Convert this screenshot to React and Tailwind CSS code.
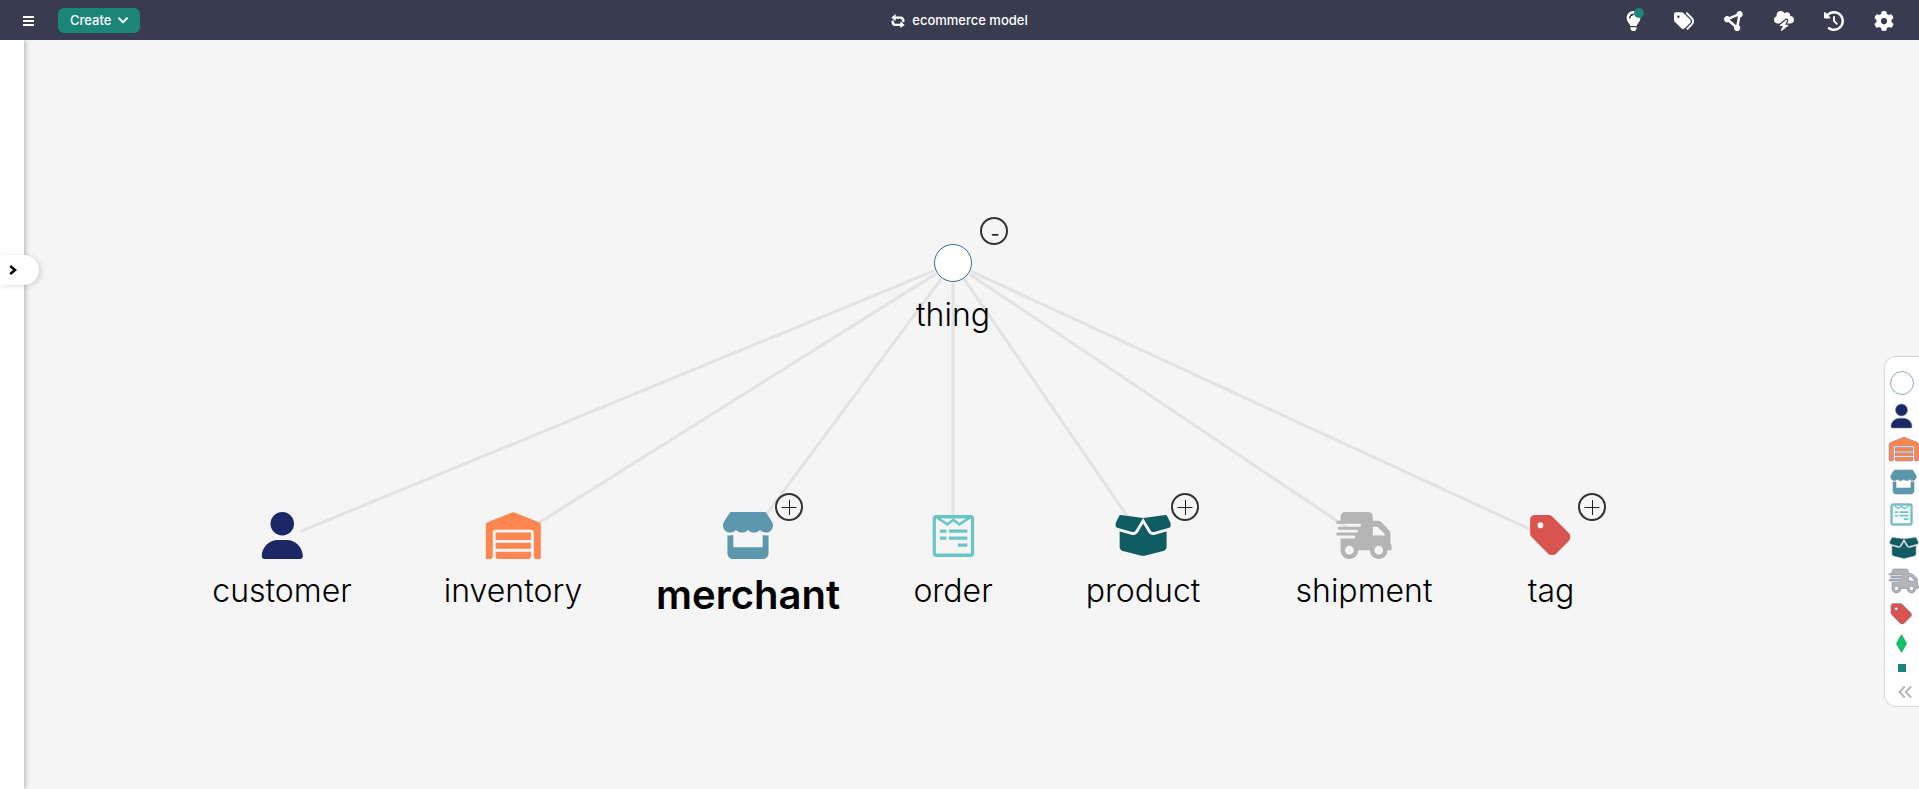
import React from "react";
import {
  FaUser,
  FaWarehouse,
  FaStore,
  FaBoxOpen,
  FaTruckFast,
  FaTag,
  FaLightbulb,
  FaTags,
  FaCircleNodes,
  FaCloudBolt,
  FaClockRotateLeft,
  FaGear,
} from "react-icons/fa6";

function ReceiptIcon({ className, strokeWidth = 0 }) {
  return (
    <svg viewBox="0 0 42 42" className={className} fill="none" stroke="currentColor" aria-hidden="true">
      {strokeWidth > 0 && <rect x="0" y="0" width="42" height="42" rx="3" stroke="#6e87a5" strokeWidth="2" />}
      <rect x="1.8" y="1.8" width="38.4" height="38.4" rx="2" strokeWidth="3.4" />
      <path d="M4.5 2.5 15 9.3 21 4.8 27 9.3 37.5 2.5" strokeWidth="2.6" />
      <path d="M7.5 16.2h6.5M16.5 16.2h18.5M7.5 23.2h6.5M16.5 23.2h18.5M25.5 30.2h9.5" strokeWidth="3.2" />
    </svg>
  );
}

const ICONS = {
  customer: { Icon: FaUser, color: "text-[#1c2765]", size: "w-[42px] h-[47px]", small: "w-[21px] h-6 ml-px", box: "0 0 448 512" },
  inventory: { Icon: FaWarehouse, color: "text-[#ff8650]", size: "w-[55px] h-[47px]", small: "w-7 h-6", box: "20 0 600 512" },
  merchant: { Icon: FaStore, color: "text-[#5b97ad]", size: "w-[54px] h-[47px]", small: "w-[27px] h-6", box: "0 0 576 512" },
  order: { Icon: ReceiptIcon, color: "text-[#69c5c8]", size: "w-[42px] h-[42px]", small: "w-[21px] h-[21px] ml-px", box: "0 0 42 42" },
  product: { Icon: FaBoxOpen, color: "text-[#0f5d63]", size: "w-[55px] h-[47px]", small: "w-7 h-6", box: "20 0 600 512" },
  shipment: { Icon: FaTruckFast, color: "text-[#b4b4b4]", size: "w-[55px] h-[47px]", small: "w-7 h-6", box: "20 0 600 512" },
  tag: { Icon: FaTag, color: "text-[#d9534f]", size: "w-[42px] h-[47px]", small: "w-[21px] h-6 ml-px", box: "0 0 448 512" },
};

const ROOT = { x: 929, y: 223 };

const NODES = [
  { name: "customer", x: 258 },
  { name: "inventory", x: 489 },
  { name: "merchant", x: 724, selected: true, toggle: 765 },
  { name: "order", x: 929 },
  { name: "product", x: 1119, toggle: 1161 },
  { name: "shipment", x: 1340 },
  { name: "tag", x: 1527, toggle: 1568 },
];

const CHILD_Y = 499;

function edge(x) {
  const dx = x - ROOT.x;
  const dy = CHILD_Y - ROOT.y;
  const len = Math.hypot(dx, dy);
  const ux = dx / len;
  const uy = dy / len;
  return {
    x1: ROOT.x + ux * 20,
    y1: ROOT.y + uy * 20,
    x2: x - ux * 20,
    y2: CHILD_Y - uy * 20,
  };
}

function Toggle({ x, y, label, open }) {
  return (
    <button
      type="button"
      aria-label={label}
      className="absolute flex h-7 w-7 -translate-x-1/2 -translate-y-1/2 items-center justify-center rounded-full border-2 border-[#333] text-[#222]"
      style={{ left: x, top: y }}
    >
      {open ? (
        <span className="pt-1.5 pl-0.5 text-xl leading-none">-</span>
      ) : (
        <svg viewBox="0 0 16 16" className="h-4 w-4" stroke="currentColor" strokeWidth="1" aria-hidden="true">
          <path d="M.5 8.500H15.500M8.500 1V16" />
        </svg>
      )}
    </button>
  );
}

function Header() {
  const tools = [
    ["Tags", FaTags],
    ["Graph", FaCircleNodes],
    ["Activity", FaCloudBolt],
    ["History", FaClockRotateLeft],
    ["Settings", FaGear],
  ];
  return (
    <header className="grid h-10 grid-cols-[1fr_auto_1fr] items-center bg-[#393c50] pt-px text-white">
      <div className="flex items-center gap-6 pl-[23px]">
        <button type="button" aria-label="Menu">
          <svg viewBox="0 0 11 10" className="h-2.5 w-[11px]" fill="currentColor">
            <rect width="11" height="2" />
            <rect y="4" width="11" height="2" />
            <rect y="8" width="11" height="2" />
          </svg>
        </button>
        <button type="button" className="flex h-[25px] items-center gap-[7px] rounded-md bg-[#1b857a] px-3 text-[13px] font-medium">
          Create
          <svg viewBox="0 0 10 7" className="h-[7px] w-2.5" fill="none" stroke="currentColor" strokeWidth="2" strokeLinecap="round" strokeLinejoin="round">
            <path d="M1 1.2 5 5.4 9 1.2" />
          </svg>
        </button>
      </div>
      <div className="flex items-center gap-[7px] text-[13px] font-medium">
        <svg viewBox="0 0 14 14" className="h-3.5 w-3.5" aria-hidden="true">
          <path d="M3 3.600H9.500Q12.300 3.600 12.300 7M11 10.900H4.500Q1.700 10.900 1.700 7.500" fill="none" stroke="currentColor" strokeWidth="2.400" strokeLinecap="round" />
          <path d="M.4 3.600 4.600 0V7.200ZM13.600 10.900 9.400 7.300V14Z" fill="currentColor" />
        </svg>
        <h1>ecommerce model</h1>
      </div>
      <nav className="flex items-center justify-end gap-[30px] pr-[25px]">
        <button type="button" aria-label="Tips" className="relative flex w-5 justify-start">
          <FaLightbulb className="ml-0.5 h-5 w-[15px]" />
          <svg viewBox="0 0 15 20" className="absolute top-0 left-0.5 h-5 w-[15px]" fill="none" stroke="#393c50">
            <path d="M3.800 7.500Q3.800 4 7.500 3.800" strokeWidth="1" />
          </svg>
          <span className="absolute -top-[3px] left-2.5 h-2.5 w-2.5 rounded-full bg-[#1b857a]" />
        </button>
        {tools.map(([name, Icon]) => (
          <button key={name} type="button" aria-label={name}>
            <Icon className="h-5 w-5" />
          </button>
        ))}
      </nav>
    </header>
  );
}

function Legend() {
  return (
    <aside aria-label="Legend" className="absolute top-[316px] right-0 w-[35px] overflow-hidden rounded-l-xl border border-r-0 border-[#d9d9d9] bg-white pt-[9px] pb-0.5 pl-[5px]">
      <ul>
        <li className="flex h-[33px] items-center">
          <svg viewBox="0 0 24 24" className="h-6 w-6">
            <circle cx="12" cy="12" r="11.400" fill="#fff" stroke="#8fa5c2" />
          </svg>
        </li>
        {NODES.map(({ name }) => {
          const { Icon, color, small, box } = ICONS[name];
          return (
            <li key={name} className={"flex h-[33px] items-center " + color}>
              <Icon
                viewBox={box}
                stroke="#6e87a5"
                strokeWidth={12}
                className={"shrink-0 overflow-visible " + small}
              />
            </li>
          );
        })}
        <li className="flex h-[26px] items-center pl-1.5">
          <svg viewBox="0 0 11 19" className="h-[19px] w-[11px]">
            <path d="M5.500.8 10.400 9.500 5.500 18.200.6 9.500Z" fill="#10c469" stroke="#0fa968" />
          </svg>
        </li>
        <li className="flex h-6 items-center pl-2">
          <span className="h-2 w-2 bg-[#1b857a]" />
        </li>
      </ul>
      <button type="button" aria-label="Expand legend" className="flex h-6 items-center pl-2 text-[#b4b4b4]">
        <svg viewBox="0 0 14 12" className="h-3 w-3.5" fill="none" stroke="currentColor" strokeWidth="2">
          <path d="M6.800.6 1.500 6 6.800 11.400M13 .6 7.700 6 13 11.400" />
        </svg>
      </button>
    </aside>
  );
}

export default function App() {
  return (
    <div className="flex min-h-screen flex-col bg-[#f5f5f5] font-['Inter','Liberation_Sans',sans-serif] text-black">
      <Header />
      <div className="flex flex-1">
        <div className="relative z-10 w-6 shrink-0 bg-white shadow-[1px_0_5px_rgba(0,0,0,0.3)] [clip-path:inset(0_-24px_0_0)]">
          <button
            type="button"
            aria-label="Open panel"
            className="absolute top-[215px] left-0 flex h-[30px] w-[39px] items-center rounded-r-full bg-white pl-[9px] shadow-[2px_1px_5px_rgba(0,0,0,0.15)]"
          >
            <svg viewBox="0 0 8 10" className="h-2.5 w-2" fill="none" stroke="currentColor" strokeWidth="2.600">
              <path d="M1.200 1 6 5 1.200 9" />
            </svg>
          </button>
        </div>
        <main className="relative flex-1 overflow-hidden">
          <svg className="absolute inset-0 h-full w-full" stroke="#e3e3e3" strokeWidth="3" aria-hidden="true">
            {NODES.map((n) => (
              <line key={n.name} {...edge(n.x)} />
            ))}
          </svg>

          <div className="absolute top-[204px] flex -translate-x-1/2 flex-col items-center gap-3" style={{ left: ROOT.x }}>
            <span className="h-[38px] w-[38px] rounded-full border border-[#3f6797] bg-white" />
            <span className="text-[32px] leading-[42px] font-light">thing</span>
          </div>
          <Toggle x={970} y={191} label="Collapse thing" open />

          {NODES.map(({ name, x, selected }) => {
            const { Icon, color, size, box } = ICONS[name];
            return (
              <div key={name} className="absolute top-[472px] flex -translate-x-1/2 flex-col items-center gap-[11px]" style={{ left: x }}>
                <span className={"flex h-[47px] items-center " + color}>
                  <Icon viewBox={box} className={size} />
                </span>
                <span className={selected ? "text-[40px] leading-[50px] font-semibold" : "text-[32px] leading-[42px] font-light"}>{name}</span>
              </div>
            );
          })}
          {NODES.filter((n) => n.toggle).map((n) => (
            <Toggle key={n.name} x={n.toggle} y={467} label={"Expand " + n.name} />
          ))}

          <Legend />
        </main>
      </div>
    </div>
  );
}
